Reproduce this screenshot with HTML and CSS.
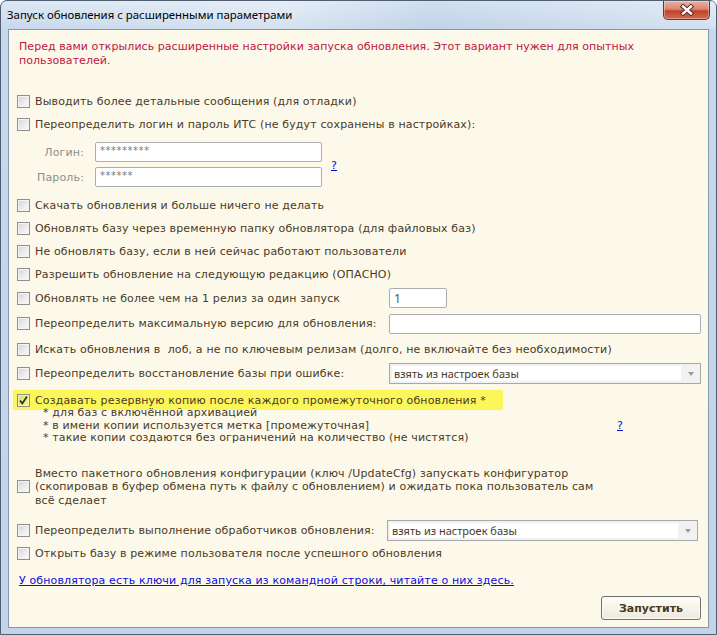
FILE: index.html
```html
<!DOCTYPE html>
<html lang="ru">
<head>
<meta charset="utf-8">
<title>Запуск обновления с расширенными параметрами</title>
<link rel="stylesheet" href="styles.css">
</head>
<body>
<div class="window">
  <div class="titlebar">
    <span class="title">Запуск обновления с расширенными параметрами</span>
    <div class="close">
      <svg width="16" height="12" viewBox="0 0 16 12">
        <path d="M4 2.5 L12 9.5 M12 2.5 L4 9.5" stroke="#5a2c24" stroke-width="4.4" stroke-linecap="square" fill="none"/>
        <path d="M4 2.5 L12 9.5 M12 2.5 L4 9.5" stroke="#ffffff" stroke-width="2.4" stroke-linecap="square" fill="none"/>
      </svg>
    </div>
  </div>
  <div class="panel">
    <p class="intro">Перед вами открылись расширенные настройки запуска обновления. Этот вариант нужен для опытных<br>пользователей.</p>

    <div class="row h23"><span class="cb"></span><span>Выводить более детальные сообщения (для отладки)</span></div>
    <div class="row h23"><span class="cb"></span><span>Переопределить логин и пароль ИТС (не будут сохранены в настройках):</span></div>

    <div class="login">
      <span class="login-label">Логин:</span>
      <div class="input wide">*********</div>
      <a class="help help-login" href="#">?</a>
      <span class="login-label">Пароль:</span>
      <div class="input wide">******</div>
    </div>

    <div class="row h23 gap7"><span class="cb"></span><span>Скачать обновления и больше ничего не делать</span></div>
    <div class="row h23"><span class="cb"></span><span>Обновлять базу через временную папку обновлятора (для файловых баз)</span></div>
    <div class="row h23"><span class="cb"></span><span>Не обновлять базу, если в ней сейчас работают пользователи</span></div>
    <div class="row h23"><span class="cb"></span><span>Разрешить обновление на следующую редакцию (ОПАСНО)</span></div>
    <div class="row h24"><span class="cb"></span><span class="lbl">Обновлять не более чем на 1 релиз за один запуск</span><div class="input small num">1</div></div>
    <div class="row h27"><span class="cb"></span><span class="lbl">Переопределить максимальную версию для обновления:</span><div class="input long"></div></div>
    <div class="row h24"><span class="cb"></span><span>Искать обновления в &nbsp;лоб, а не по ключевым релизам (долго, не включайте без необходимости)</span></div>
    <div class="row h25"><span class="cb"></span><span class="lbl">Переопределить восстановление базы при ошибке:</span>
      <div class="select"><div class="field">взять из настроек базы</div><div class="arrow"><span class="tri"></span></div></div>
    </div>

    <div class="row hl"><span class="cb checked"><svg width="11" height="11" viewBox="0 0 11 11"><path d="M2 5.5 L4.3 8.5 L9 1.5" stroke="#2f3a1c" stroke-width="1.8" fill="none"/></svg></span><span>Создавать резервную копию после каждого промежуточного обновления *</span></div>
    <div class="notes">
      <div>* для баз с включённой архивацией</div>
      <div><span class="note-text">* в имени копии используется метка [промежуточная]</span><a class="help" href="#">?</a></div>
      <div>* такие копии создаются без ограничений на количество (не чистятся)</div>
    </div>

    <div class="row multi"><span class="cb"></span><span class="multi-text">Вместо пакетного обновления конфигурации (ключ /UpdateCfg) запускать конфигуратор<br>(скопировав в буфер обмена путь к файлу с обновлением) и ожидать пока пользователь сам<br>всё сделает</span></div>

    <div class="row h23 gap12"><span class="cb"></span><span class="lbl lbl2">Переопределить выполнение обработчиков обновления:</span>
      <div class="select sel2"><div class="field">взять из настроек базы</div><div class="arrow"><span class="tri"></span></div></div>
    </div>
    <div class="row h23"><span class="cb"></span><span>Открыть базу в режиме пользователя после успешного обновления</span></div>

    <a class="cmdlink" href="#">У обновлятора есть ключи для запуска из командной строки, читайте о них здесь.</a>

    <div class="actions"><button class="btn" type="button">Запустить</button></div>
  </div>
</div>
</body>
</html>
```

FILE: styles.css
```css
* { box-sizing: border-box; }

body {
  margin: 0;
  font-family: "DejaVu Sans", Verdana, sans-serif;
  font-size: 11px;
  letter-spacing: 0.14px;
  color: #4b3a1e;
  background: #ffffff;
}

.window {
  width: 717px;
  height: 635px;
  display: flex;
  flex-direction: column;
  border: 1px solid #4f5e70;
  border-radius: 7px 7px 0 0;
  background: linear-gradient(to bottom, #dde8f4 0, #c7d8eb 28px, #c2d4ea 100%);
}

.titlebar {
  height: 28px;
  flex: none;
  display: flex;
  justify-content: space-between;
  align-items: flex-start;
  background: linear-gradient(90deg, rgba(255,255,255,0) 0, rgba(255,255,255,.25) 40%, rgba(180,200,225,.3) 60%, rgba(255,255,255,.2) 100%);
}

.title {
  font-family: "Noto Sans", "Open Sans", sans-serif;
  font-size: 11.4px;
  letter-spacing: 0;
  color: #000;
  padding: 6px 0 0 6px;
  line-height: 16px;
}

.close {
  width: 47px;
  height: 19px;
  margin-right: 6px;
  border: 1px solid #6b3329;
  border-top: none;
  border-radius: 0 0 5px 5px;
  background: linear-gradient(to bottom, #ebb1a3 0, #dc8570 45%, #c3432a 55%, #d26a50 100%);
  display: flex;
  align-items: center;
  justify-content: center;
  box-shadow: inset 0 0 0 1px rgba(255,255,255,.35);
}

.panel {
  flex: 1;
  margin: 0 7px 6px 7px;
  border: 1px solid #8697ad;
  background: #fcf9eb;
  padding-top: 10px;
  display: flex;
  flex-direction: column;
}

.intro {
  margin: 0 0 22px 0;
  padding-left: 10px;
  line-height: 14px;
  letter-spacing: 0.05px;
  color: #bf1542;
}

.row {
  display: flex;
  align-items: center;
  padding-left: 8px;
  flex: none;
}
.h23 { height: 23px; }
.h24 { height: 24px; }
.h25 { height: 25px; }
.h27 { height: 27px; }
.gap7 { margin-top: 7px; }
.gap12 { margin-top: 12px; }

.cb {
  width: 13px;
  height: 13px;
  flex: none;
  margin-right: 5px;
  border: 1px solid #8e8f8f;
  background: linear-gradient(135deg, #d2d4d8 0, #eeeeee 60%, #fafafa 100%);
  box-shadow: inset 0 0 0 1px #f4f4f4;
  display: flex;
  align-items: center;
  justify-content: center;
}
.cb.checked {
  background: linear-gradient(135deg, rgba(190,190,150,.55) 0, rgba(255,255,220,.3) 100%);
  box-shadow: inset 0 0 0 1px rgba(255,255,200,.6);
}

.lbl { width: 354px; flex: none; }
.lbl2 { width: 352px; }

.input {
  height: 20px;
  border: 1px solid #abadb3;
  border-radius: 2px;
  background: #fff;
  color: #7a7a7a;
  padding: 1px 4px;
  line-height: 14px;
  font-size: 10px;
  letter-spacing: .5px;
}
.wide { width: 227px; height: 20px; }
.small { width: 58px; }
.long { width: 312px; }
.num {
  font-family: "Noto Sans", sans-serif;
  font-size: 12px;
  color: #555;
  line-height: 17px;
  letter-spacing: 0;
}

.login {
  display: grid;
  grid-template-columns: 75px 227px auto;
  grid-auto-rows: 20px;
  column-gap: 11px;
  row-gap: 5px;
  margin-top: 6px;
  align-items: center;
}
.login-label {
  text-align: right;
  color: #8d8d8d;
}
.help {
  color: #0d0dd8;
  text-decoration: underline;
}
.help-login {
  grid-row: 1 / 3;
  grid-column: 3;
  margin-left: -2px;
  margin-top: 2px;
}

.select {
  width: 312px;
  height: 21px;
  border: 1px solid #a8a8a8;
  background: #f2f2f2;
  display: flex;
  padding: 2px 0 2px 2px;
}
.sel2 { width: 311px; }
.select .field {
  flex: 1;
  background: #fff;
  font-family: "Noto Sans", sans-serif;
  font-size: 11px;
  letter-spacing: 0;
  line-height: 15px;
  color: #4b3a1e;
  padding-left: 2px;
}
.select .arrow {
  width: 19px;
  display: flex;
  align-items: center;
  justify-content: center;
}
.tri {
  width: 0;
  height: 0;
  border-left: 3.5px solid transparent;
  border-right: 3.5px solid transparent;
  border-top: 4px solid #9c9c9c;
}

.row.hl {
  height: 20px;
  margin-top: 4px;
  margin-left: 4px;
  padding-left: 4px;
  width: 490px;
  background: #fbf75b;
}

.notes {
  margin-top: -3px;
  padding-left: 34px;
  line-height: 12.5px;
}
.note-text {
  display: inline-block;
  width: 574px;
}

.row.multi {
  margin-top: 22px;
}
.multi-text {
  line-height: 13.5px;
}

.cmdlink {
  margin: 9px 0 0 10px;
  line-height: 14px;
  color: #0d0dd8;
  text-decoration: underline;
  align-self: flex-start;
}

.actions {
  display: flex;
  justify-content: flex-end;
  margin-top: 8px;
  padding-right: 7px;
}
.btn {
  width: 100px;
  height: 24px;
  border: 1px solid #707070;
  border-radius: 3px;
  background: linear-gradient(to bottom, #fefdf8 0, #f6f4ea 50%, #eceadd 100%);
  box-shadow: inset 0 0 0 1px #fbfaf3;
  font-family: "DejaVu Sans", Verdana, sans-serif;
  font-size: 11px;
  letter-spacing: 0;
  font-weight: bold;
  color: #4b3a1e;
  padding: 0;
}
```
